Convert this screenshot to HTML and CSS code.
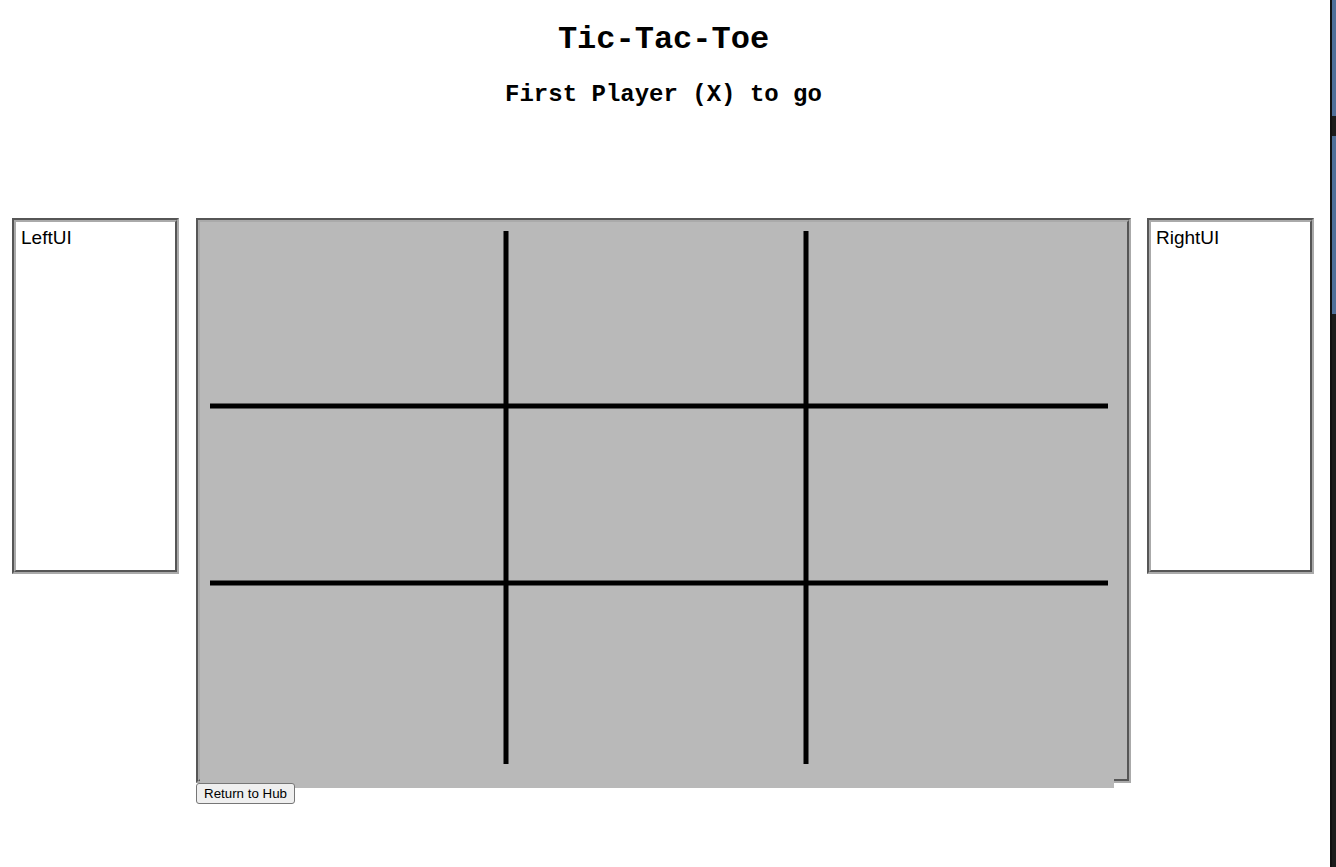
FILE: index.html
```html
<!DOCTYPE html>
<html lang="en">
<head>
<meta charset="UTF-8">
<title>Tic-Tac-Toe</title>
<link rel="stylesheet" href="styles.css">
</head>
<body>

<h1>Tic-Tac-Toe</h1>
<h2 id="status">First Player (X) to go</h2>

<div class="game">
  <div class="side-ui" id="left-ui">LeftUI</div>

  <div class="board-col">
    <div class="board-frame">
      <div class="board">
        <svg width="914" height="566" viewBox="0 0 914 566">
          <line x1="306" y1="9" x2="306" y2="542" />
          <line x1="606" y1="9" x2="606" y2="542" />
          <line x1="10" y1="184" x2="908" y2="184" />
          <line x1="10" y1="361" x2="908" y2="361" />
        </svg>
      </div>
    </div>
    <button id="hub-btn">Return to Hub</button>
  </div>

  <div class="side-ui" id="right-ui">RightUI</div>
</div>

<div class="edge">
  <div class="edge-blue top"></div>
  <div class="edge-blue mid"></div>
</div>

</body>
</html>
```

FILE: styles.css
```css
body {
  margin: 0;
  background: #fff;
  font-family: "Liberation Sans", Arial, sans-serif;
}
h1, h2 {
  font-family: "Courier New", "Liberation Mono", monospace;
  font-weight: bold;
  text-align: center;
  margin: 0;
  padding-right: 9px;
}
h1 {
  font-size: 32px;
  line-height: 36px;
  margin-top: 22px;
}
h2 {
  font-size: 24px;
  line-height: 27px;
  margin-top: 23px;
}
.game {
  display: flex;
  align-items: flex-start;
  column-gap: 16px;
  padding-left: 12px;
  margin-top: 110px;
}
.side-ui {
  box-sizing: border-box;
  width: 167px;
  height: 356px;
  border: 4px groove #aaa;
  padding: 5px;
  font-size: 19px;
  line-height: 22px;
  color: #000;
}
#left-ui {
  margin-right: 1px;
}
.board-col {
  display: flex;
  flex-direction: column;
  align-items: flex-start;
}
.board-frame {
  box-sizing: border-box;
  width: 935px;
  height: 565px;
  border: 4px groove #aaa;
  background: #b9b9b9;
}
.board {
  width: 914px;
  height: 566px;
  background: #b9b9b9;
}
.board svg {
  display: block;
}
.board line {
  stroke: #000;
  stroke-width: 5;
}
#hub-btn {
  font-family: "Liberation Sans", Arial, sans-serif;
  font-size: 13.33px;
  height: 21px;
  padding: 1px 7px;
  background: #efefef;
  border: 1px solid #767676;
  border-radius: 3px;
  color: #000;
}
.edge {
  position: fixed;
  top: 0;
  right: 0;
  bottom: 0;
  width: 4px;
  border-left: 2px solid #111;
  background: #1c1c1c;
}
.edge-blue {
  position: absolute;
  left: 0;
  right: 0;
  background: #4f6f99;
}
.edge-blue.top {
  top: 0;
  height: 116px;
}
.edge-blue.mid {
  top: 136px;
  height: 178px;
}
```
